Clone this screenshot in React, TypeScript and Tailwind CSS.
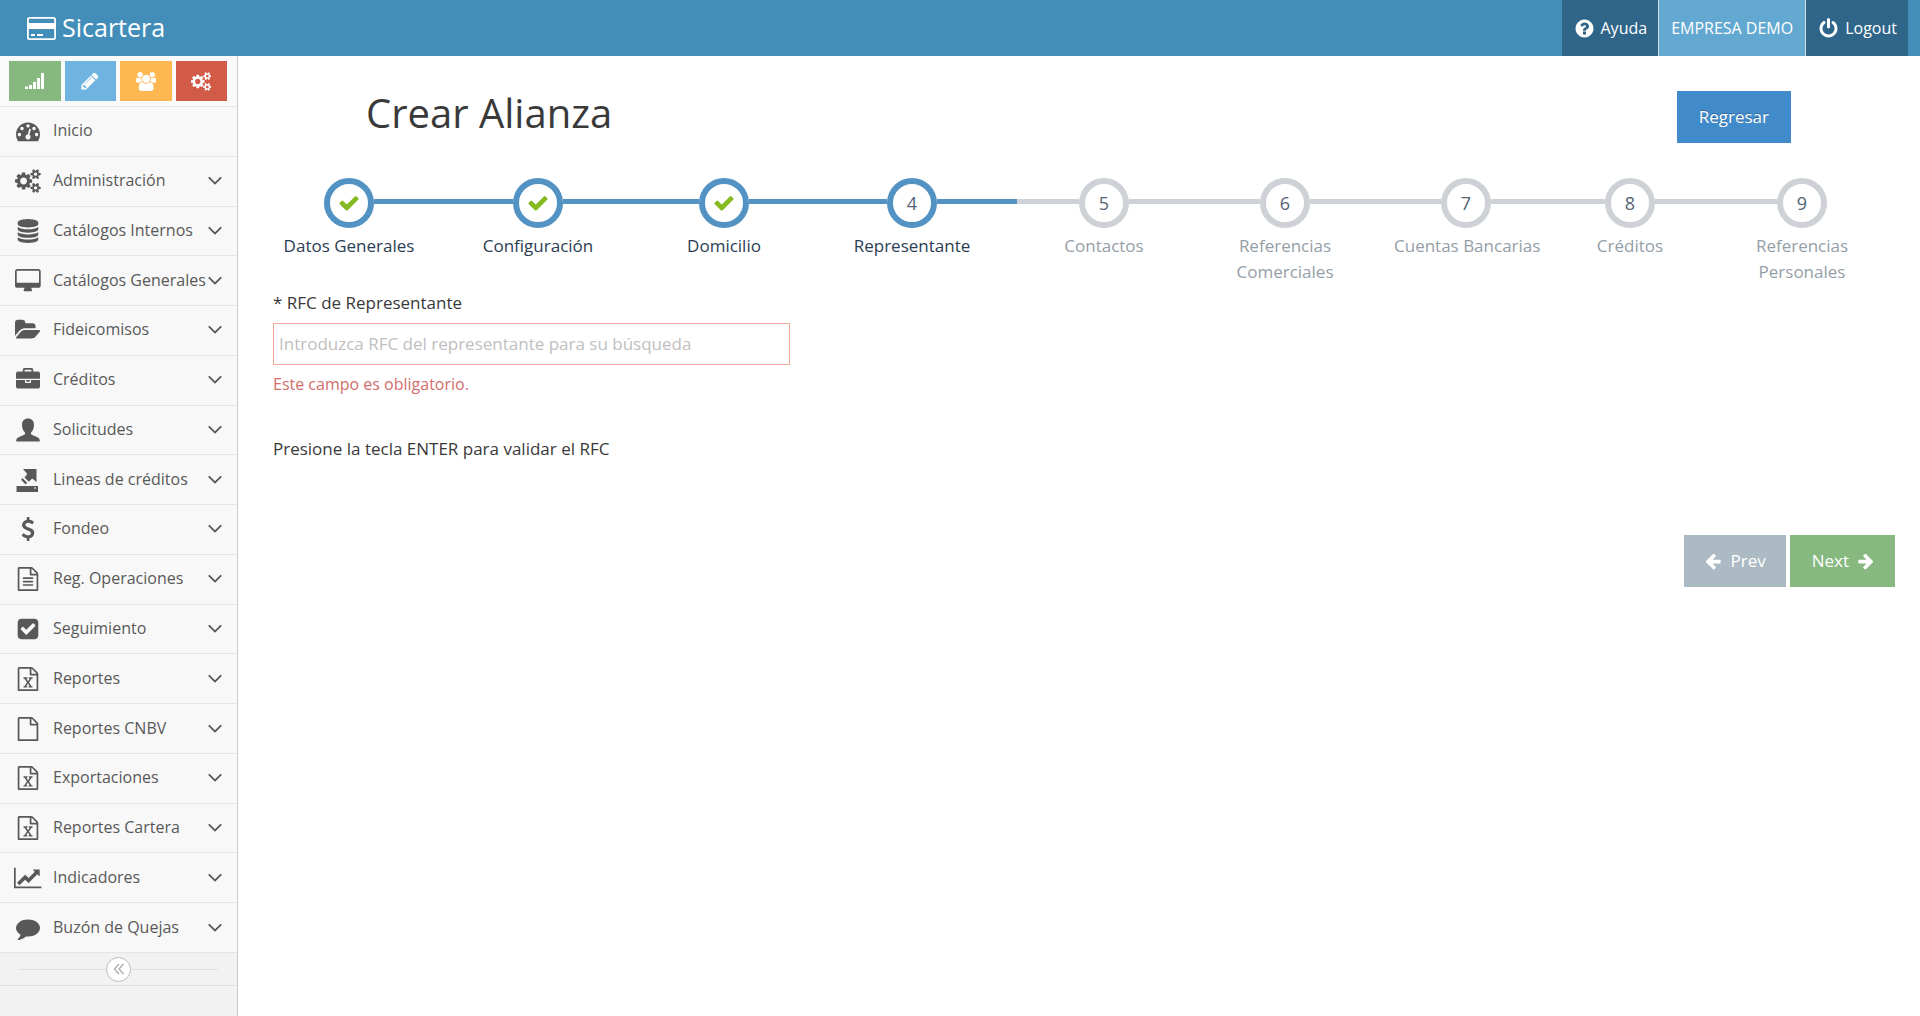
import { useState } from 'react';
import type { ReactNode } from 'react';

interface GlyphProps {
  d: string;
  className?: string;
  width?: number;
}

interface MenuEntry {
  label: string;
  icon: ReactNode;
  leaf?: boolean;
}

const COGS =
  'M896 896q0-106-75-181t-181-75-181 75-75 181 75 181 181 75 181-75 75-181zm768 512q0-52-38-90t-90-38-90 38-38 90q0 53 37.5 90.5t90.5 37.5 90.5-37.5 37.5-90.5zm0-1024q0-52-38-90t-90-38-90 38-38 90q0 53 37.5 90.5t90.5 37.5 90.5-37.5 37.5-90.5zm-384 421v185q0 10-7 19.5t-16 10.5l-155 24q-11 35-32 76 34 48 90 115 7 11 7 20 0 12-7 19-23 30-82.5 89.5t-78.5 59.5q-11 0-21-7l-115-90q-37 19-77 31-11 108-23 155-7 24-30 24h-186q-11 0-20-7.5t-10-17.5l-23-153q-34-10-75-31l-118 89q-7 7-20 7-11 0-21-8-144-133-144-160 0-9 7-19 10-14 41-53t47-61q-23-44-35-82l-152-24q-10-1-17-9.5t-7-19.5v-185q0-10 7-19.5t16-10.5l155-24q11-35 32-76-34-48-90-115-7-11-7-20 0-12 7-20 22-30 82-89t79-59q11 0 21 7l115 90q34-18 77-32 11-108 23-154 7-24 30-24h186q11 0 20 7.5t10 17.5l23 153q34 10 75 31l118-89q8-7 20-7 11 0 21 8 144 133 144 160 0 8-7 19-12 16-42 54t-45 60q23 48 34 82l152 23q10 2 17 10.5t7 19.5zm640 533v140q0 16-149 31-12 27-30 52 51 113 51 138 0 4-4 7-122 71-124 71-8 0-46-47t-52-68q-20 2-30 2t-30-2q-14 21-52 68t-46 47q-2 0-124-71-4-3-4-7 0-25 51-138-18-25-30-52-149-15-149-31v-140q0-16 149-31 13-29 30-52-51-113-51-138 0-4 4-7 4-2 35-20t59-34 30-16q8 0 46 46.5t52 67.5q20-2 30-2t30 2q51-71 92-112l6-2q4 0 124 70 4 3 4 7 0 25-51 138 17 23 30 52 149 15 149 31zm0-1024v140q0 16-149 31-12 27-30 52 51 113 51 138 0 4-4 7-122 71-124 71-8 0-46-47t-52-68q-20 2-30 2t-30-2q-14 21-52 68t-46 47q-2 0-124-71-4-3-4-7 0-25 51-138-18-25-30-52-149-15-149-31v-140q0-16 149-31 13-29 30-52-51-113-51-138 0-4 4-7 4-2 35-20t59-34 30-16q8 0 46 46.5t52 67.5q20-2 30-2t30 2q51-71 92-112l6-2q4 0 124 70 4 3 4 7 0 25-51 138 17 23 30 52 149 15 149 31z';
const DASHBOARD =
  'M384 1152q0-53-37.5-90.5t-90.5-37.5-90.5 37.5-37.5 90.5 37.5 90.5 90.5 37.5 90.5-37.5 37.5-90.5zm192-448q0-53-37.5-90.5t-90.5-37.5-90.5 37.5-37.5 90.5 37.5 90.5 90.5 37.5 90.5-37.5 37.5-90.5zm428 481l101-382q6-26-7.5-48.5t-38.5-29.5-48 6.5-30 39.5l-101 382q-60 5-107 43.5t-63 98.5q-20 77 20 146t117 89 146-20 89-117q16-60-6-117t-72-91zm660-33q0-53-37.5-90.5t-90.5-37.5-90.5 37.5-37.5 90.5 37.5 90.5 90.5 37.5 90.5-37.5 37.5-90.5zm-640-640q0-53-37.5-90.5t-90.5-37.5-90.5 37.5-37.5 90.5 37.5 90.5 90.5 37.5 90.5-37.5 37.5-90.5zm448 192q0-53-37.5-90.5t-90.5-37.5-90.5 37.5-37.5 90.5 37.5 90.5 90.5 37.5 90.5-37.5 37.5-90.5zm320 448q0 261-141 483-19 29-54 29h-1402q-35 0-54-29-141-221-141-483 0-182 71-348t191-286 286-191 348-71 348 71 286 191 191 286 71 348z';
const DATABASE =
  'M896 768q237 0 443-43t325-127v170q0 69-103 128t-280 93.5-385 34.5-385-34.5-280-93.5-103-128v-170q119 84 325 127t443 43zm0 768q237 0 443-43t325-127v170q0 69-103 128t-280 93.5-385 34.5-385-34.5-280-93.5-103-128v-170q119 84 325 127t443 43zm0-384q237 0 443-43t325-127v170q0 69-103 128t-280 93.5-385 34.5-385-34.5-280-93.5-103-128v-170q119 84 325 127t443 43zm0-1152q208 0 385 34.5t280 93.5 103 128v128q0 69-103 128t-280 93.5-385 34.5-385-34.5-280-93.5-103-128v-128q0-69 103-128t280-93.5 385-34.5z';
const DESKTOP =
  'M1792 992v-832q0-13-9.5-22.5t-22.5-9.5h-1600q-13 0-22.5 9.5t-9.5 22.5v832q0 13 9.5 22.5t22.5 9.5h1600q13 0 22.5-9.5t9.5-22.5zm128-832v1088q0 66-47 113t-113 47h-544q0 37 16 77.5t32 71 16 43.5q0 26-19 45t-45 19h-512q-26 0-45-19t-19-45q0-14 16-44t32-70 16-78h-544q-66 0-113-47t-47-113v-1088q0-66 47-113t113-47h1600q66 0 113 47t47 113z';
const FOLDER_OPEN =
  'M1879 952q0 31-31 66l-336 396q-43 51-120.5 86.5t-143.5 35.5h-1088q-34 0-60.5-13t-26.5-43q0-31 31-66l336-396q43-51 120.5-86.5t143.5-35.5h1088q34 0 60.5 13t26.5 43zm-343-344v160h-832q-94 0-197 47.5t-164 119.5l-337 396-5 6q0-4-.5-12.5t-.5-12.5v-960q0-92 66-158t158-66h320q92 0 158 66t66 158v32h544q92 0 158 66t66 158z';
const BRIEFCASE =
  'M640 256h512v-128h-512v128zm1152 640v480q0 66-47 113t-113 47h-1472q-66 0-113-47t-47-113v-480h672v160q0 26 19 45t45 19h320q26 0 45-19t19-45v-160h672zm-768 0v128h-256v-128h256zm768-480v384h-1792v-384q0-66 47-113t113-47h352v-160q0-40 28-68t68-28h576q40 0 68 28t28 68v160h352q66 0 113 47t47 113z';
const DOLLAR =
  'M1362 1185q0 153-99.5 263.5t-258.5 136.5v175q0 14-9 23t-23 9h-135q-13 0-22.5-9.5t-9.5-22.5v-175q-66-9-127.5-31t-101.5-44.5-74-48-46.5-37.5-17.5-18q-17-21-2-41l103-135q7-10 23-12 15-2 24 9l2 2q113 99 243 125 37 8 74 8 81 0 142.5-43t61.5-122q0-28-15-53t-33.5-42-58.5-37.5-66-32-80-32.5q-39-16-61.5-25t-61.5-26.5-62.5-31-56.5-35.5-53.5-42.5-43.5-49-35.5-58-21-66.5-8.5-78q0-138 98-242t255-134v-180q0-13 9.5-22.5t22.5-9.5h135q14 0 23 9t9 23v176q57 6 110.5 23t87 33.5 63.5 37.5 39 29 15 14q17 18 5 38l-81 146q-8 15-23 16-14 3-27-7-3-3-14.5-12t-39-26.5-58.5-32-74.5-26-85.5-11.5q-95 0-155 43t-60 111q0 26 8.5 48t29.5 41.5 39.5 33 56 31 60.5 27 70 27.5q53 20 81 31.5t76 35 75.5 42.5 62 50 53 63.5 31.5 76.5 13 94z';
const FILE =
  'M1596 380q28 28 48 76t20 88v1152q0 40-28 68t-68 28h-1344q-40 0-68-28t-28-68v-1600q0-40 28-68t68-28h896q40 0 88 20t76 48zm-444-244v376h376q-10-29-22-41l-313-313q-12-12-41-22zm384 1528v-1024h-416q-40 0-68-28t-28-68v-416h-768v1536h1280z';
const FILE_LINES =
  FILE +
  'm-1024-864q0-14 9-23t23-9h704q14 0 23 9t9 23v64q0 14-9 23t-23 9h-704q-14 0-23-9t-9-23v-64zm736 224q14 0 23 9t9 23v64q0 14-9 23t-23 9h-704q-14 0-23-9t-9-23v-64q0-14 9-23t23-9h704zm0 256q14 0 23 9t9 23v64q0 14-9 23t-23 9h-704q-14 0-23-9t-9-23v-64q0-14 9-23t23-9h704z';
const FILE_EXCEL =
  FILE +
  'm-979-234v106h281v-106h-75l103-161q5-7 10-16.5t7.5-13.5 3.5-4h2q1 4 5 10 2 4 4.5 7.5t6 8 6.5 8.5l107 161h-76v106h291v-106h-68l-192-273 195-282h67v-107h-279v107h74l-103 159q-4 7-10 16.5t-9 13.5l-2 3h-2q-1-4-5-10-6-11-17-23l-106-159h76v-107h-290v107h68l189 272-194 283h-68z';
const CHECK_SQUARE =
  'M813 1299l614-614q19-19 19-45t-19-45l-102-102q-19-19-45-19t-45 19l-467 467-211-211q-19-19-45-19t-45 19l-102 102q-19 19-19 45t19 45l358 358q19 19 45 19t45-19zm851-883v960q0 119-84.5 203.5t-203.5 84.5h-960q-119 0-203.5-84.5t-84.5-203.5v-960q0-119 84.5-203.5t203.5-84.5h960q119 0 203.5 84.5t84.5 203.5z';
const LINE_CHART =
  'M2048 1536v128h-2048v-1536h128v1408h1920zm-128-1248v435q0 21-19.5 29.5t-35.5-7.5l-121-121-633 633q-10 10-23 10t-23-10l-233-233-416 416-192-192 585-585q10-10 23-10t23 10l233 233 464-464-121-121q-16-16-7.5-35.5t29.5-19.5h435q14 0 23 9t9 23z';
const COMMENT =
  'M1792 896q0 174-120 321.5t-326 233-450 85.5q-70 0-145-8-198 175-460 242-49 14-114 22-17 2-30.5-9t-17.5-29v-1q-3-4-.5-12t2-10 4.5-9.5l6-9 7-8.5 8-9q7-8 31-34.5t34.5-38 31-39.5 32.5-51 27-59 26-76q-157-89-247.5-220t-90.5-281q0-130 71-248.5t191-204.5 286-136.5 348-50.5q244 0 450 85.5t326 233 120 321.5z';
const ANGLE_DOWN =
  'M1395 736q0 13-10 23l-466 466q-10 10-23 10t-23-10l-466-466q-10-10-10-23t10-23l50-50q10-10 23-10t23 10l393 393 393-393q10-10 23-10t23 10l50 50q10 10 10 23z';
const QUESTION =
  'M1024 1376v-192q0-14-9-23t-23-9h-192q-14 0-23 9t-9 23v192q0 14 9 23t23 9h192q14 0 23-9t9-23zm256-672q0-88-55.5-163t-138.5-116-170-41q-243 0-371 213-15 24 8 42l132 100q7 6 19 6 16 0 25-12 53-68 86-92 34-24 86-24 48 0 85.5 26t37.5 59q0 38-20 61t-68 45q-63 28-115.5 86.5t-52.5 125.5v36q0 14 9 23t23 9h192q14 0 23-9t9-23q0-19 21.5-49.5t54.5-49.5q32-18 49-28.5t46-35 44.5-48 28-60.5 12.5-81zm384 192q0 209-103 385.5t-279.5 279.5-385.5 103-385.5-103-279.5-279.5-103-385.5 103-385.5 279.5-279.5 385.5-103 385.5 103 279.5 279.5 103 385.5z';
const POWER =
  'M1664 896q0 156-61 298t-164 245-245 164-298 61-298-61-245-164-164-245-61-298q0-182 80.5-343t226.5-270q43-32 95.5-25t83.5 50q32 42 24.5 94.5t-49.5 84.5q-98 74-151.5 181t-53.5 228q0 104 40.5 198.5t109.5 163.5 163.5 109.5 198.5 40.5 198.5-40.5 163.5-109.5 109.5-163.5 40.5-198.5q0-121-53.5-228t-151.5-181q-42-32-49.5-84.5t24.5-94.5q31-43 84-50t95 25q146 109 226.5 270t80.5 343zm-640-768v640q0 52-38 90t-90 38-90-38-38-90v-640q0-52 38-90t90-38 90 38 38 90z';
const PENCIL =
  'M491 1536l91-91-235-235-91 91v107h128v128h107zm523-928q0-22-22-22-10 0-17 7l-542 542q-7 7-7 17 0 22 22 22 10 0 17-7l542-542q7-7 7-17zm-54-192l416 416-832 832h-416v-416zm683 96q0 53-37 90l-166 166-416-416 166-165q36-38 90-38 53 0 91 38l235 234q37 39 37 91z';
const USERS =
  'M593 896q-162 5-265 128h-134q-82 0-138-40.5t-56-118.5q0-353 124-353 6 0 43.5 21t97.5 42.5 119 21.5q67 0 133-23-5 37-5 66 0 139 81 256zm1071 637q0 120-73 189.5t-194 69.5h-874q-121 0-194-69.5t-73-189.5q0-53 3.5-103.5t14-109 26.5-108.5 43-97.5 62-81 85.5-53.5 111.5-20q10 0 43 21.5t73 48 107 48 135 21.5 135-21.5 107-48 73-48 43-21.5q61 0 111.5 20t85.5 53.5 62 81 43 97.5 26.5 108.5 14 109 3.5 103.5zm-1024-1277q0 106-75 181t-181 75-181-75-75-181 75-181 181-75 181 75 75 181zm704 384q0 159-112.5 271.5t-271.5 112.5-271.5-112.5-112.5-271.5 112.5-271.5 271.5-112.5 271.5 112.5 112.5 271.5zm576 225q0 78-56 118.5t-138 40.5h-134q-103-123-265-128 81-117 81-256 0-29-5-66 66 23 133 23 59 0 119-21.5t97.5-42.5 43.5-21q124 0 124 353zm-128-609q0 106-75 181t-181 75-181-75-75-181 75-181 181-75 181 75 75 181z';
const CHECK =
  'M1671 566q0 40-28 68l-724 724-136 136q-28 28-68 28t-68-28l-136-136-362-362q-28-28-28-68t28-68l136-136q28-28 68-28t68 28l294 295 656-657q28-28 68-28t68 28l136 136q28 28 28 68z';
const ARROW_LEFT =
  'M1664 896v128q0 53-32.5 90.5t-84.5 37.5h-704l293 294q38 36 38 90t-38 90l-75 76q-37 37-90 37-52 0-91-37l-651-652q-37-37-37-90 0-52 37-91l651-650q38-38 91-38 52 0 90 38l75 74q38 38 38 91t-38 91l-293 293h704q52 0 84.5 37.5t32.5 90.5z';

function Glyph({ d, className, width = 1792 }: GlyphProps) {
  return (
    <svg viewBox={`0 0 ${width} 1792`} fill="currentColor" aria-hidden="true" className={className}>
      <path d={d} />
    </svg>
  );
}

function CardLogo() {
  return (
    <svg viewBox="0 0 29 23" aria-hidden="true" className="h-[23px] w-[29px] shrink-0">
      <rect x="0.9" y="0.9" width="27.2" height="21.2" rx="1.6" fill="none" stroke="currentColor" strokeWidth="1.8" />
      <path d="M1 6h27v6H1zM4 17h4v2H4zM10 17h6v2h-6z" fill="currentColor" />
    </svg>
  );
}

function UserIcon() {
  return (
    <svg viewBox="0 0 24 24" fill="currentColor" aria-hidden="true" className="h-6 w-6">
      <path d="M12 .5c3.700 0 6 2.500 6 6.200 0 3.300-1.200 6-2.700 7.500-.5.6-.6 1.800.2 2.400 1.400 1 4.500 1.900 6.700 3.200 1.200.7 1.600 1.800 1.600 3.700H.2c0-1.900.4-3 1.600-3.700 2.200-1.300 5.300-2.200 6.700-3.200.8-.6.7-1.800.2-2.400C7.200 12.700 6 10 6 6.700 6 3 8.300.5 12 .5z" />
    </svg>
  );
}

function ExportIcon() {
  return (
    <svg viewBox="0 0 24 24" fill="currentColor" aria-hidden="true" className="h-6 w-6">
      <path d="M7 1h13.500v13l-4.300-3.600-3.400 3.400-4.300-4.300 2.800-3.400zM6.600 10.200l4.600 4.600-1.600 1.600-4.600-4.600z" />
      <path fillRule="evenodd" d="M.5 18h21.500v6H.5zM18 19.500v1h2v-1z" />
    </svg>
  );
}

function SignalIcon() {
  return (
    <svg viewBox="0 0 19 16" fill="currentColor" aria-hidden="true" className="h-4 w-[19px]">
      <path d="M0 13.500h3V16H0zM4 12h3v4H4zM8 9h3v7H8zM12 5h3v11h-3zM16 0h3v16h-3z" />
    </svg>
  );
}

const menu: MenuEntry[] = [
  { label: 'Inicio', icon: <Glyph d={DASHBOARD} className="h-6 w-6" />, leaf: true },
  { label: 'Administración', icon: <Glyph d={COGS} width={1920} className="h-6" /> },
  { label: 'Catálogos Internos', icon: <Glyph d={DATABASE} className="h-6 w-6" /> },
  { label: 'Catálogos Generales', icon: <Glyph d={DESKTOP} width={1920} className="h-6" /> },
  { label: 'Fideicomisos', icon: <Glyph d={FOLDER_OPEN} width={1920} className="h-6" /> },
  { label: 'Créditos', icon: <Glyph d={BRIEFCASE} className="h-6 w-6" /> },
  { label: 'Solicitudes', icon: <UserIcon /> },
  { label: 'Lineas de créditos', icon: <ExportIcon /> },
  { label: 'Fondeo', icon: <Glyph d={DOLLAR} className="h-6 w-6" /> },
  { label: 'Reg. Operaciones', icon: <Glyph d={FILE_LINES} className="h-6 w-6" /> },
  { label: 'Seguimiento', icon: <Glyph d={CHECK_SQUARE} className="h-6 w-6" /> },
  { label: 'Reportes', icon: <Glyph d={FILE_EXCEL} className="h-6 w-6" /> },
  { label: 'Reportes CNBV', icon: <Glyph d={FILE} className="h-6 w-6" /> },
  { label: 'Exportaciones', icon: <Glyph d={FILE_EXCEL} className="h-6 w-6" /> },
  { label: 'Reportes Cartera', icon: <Glyph d={FILE_EXCEL} className="h-6 w-6" /> },
  { label: 'Indicadores', icon: <Glyph d={LINE_CHART} width={2048} className="h-6" /> },
  { label: 'Buzón de Quejas', icon: <Glyph d={COMMENT} className="h-6 w-6" /> },
];

const steps = [
  'Datos Generales',
  'Configuración',
  'Domicilio',
  'Representante',
  'Contactos',
  'Referencias Comerciales',
  'Cuentas Bancarias',
  'Créditos',
  'Referencias Personales',
];

const CURRENT_STEP = 3;

function Navbar() {
  return (
    <header className="flex h-14 items-stretch justify-between bg-[#438eb9] pr-3 text-base text-white">
      <a href="#" className="flex items-center gap-1.5 pl-[27px] text-[25px]">
        <CardLogo />
        Sicartera
      </a>
      <nav className="flex">
        <a href="#" className="flex items-center gap-1.5 bg-[#2e6589] pr-[11px] pl-3">
          <Glyph d={QUESTION} className="h-[21px] w-[21px]" />
          Ayuda
        </a>
        <a href="#" className="flex items-center border-x border-[#ddd] bg-[#62a8d1] px-3">
          EMPRESA DEMO
        </a>
        <a href="#" className="flex items-center gap-1.5 bg-[#2e6589] pr-[11px] pl-3">
          <Glyph d={POWER} className="h-[21px] w-[21px]" />
          Logout
        </a>
      </nav>
    </header>
  );
}

function Sidebar() {
  return (
    <aside className="flex w-[238px] shrink-0 flex-col border-r border-[#ccc] bg-[#f2f2f2]">
      <div className="grid h-[50px] grid-cols-4 gap-1 bg-[#fafafa] py-[5px] pr-2.5 pl-[9px] text-white">
        <button type="button" aria-label="Estadísticas" className="flex items-center justify-center bg-[#87b87f]">
          <SignalIcon />
        </button>
        <button type="button" aria-label="Editar" className="flex items-center justify-center bg-[#6fb3e0]">
          <Glyph d={PENCIL} className="h-5 w-5" />
        </button>
        <button type="button" aria-label="Usuarios" className="flex items-center justify-center bg-[#ffb752]">
          <Glyph d={USERS} width={1920} className="h-[19px]" />
        </button>
        <button type="button" aria-label="Ajustes" className="flex items-center justify-center bg-[#d15b47]">
          <Glyph d={COGS} width={1920} className="h-[19px]" />
        </button>
      </div>

      <ul className="grid h-[847px] auto-rows-fr grid-cols-1 border-b border-[#e5e5e5] text-base text-[#585858]">
        {menu.map((item) => (
          <li key={item.label} className="border-t border-[#e5e5e5] bg-[#f8f8f8]">
            <a href="#" className="flex h-full items-center pr-2.5 pl-[14px]">
              <span className="flex w-7 shrink-0 justify-center">{item.icon}</span>
              <span className="min-w-0 flex-1 pb-0.5 pl-[11px] whitespace-nowrap">{item.label}</span>
              {!item.leaf && <Glyph d={ANGLE_DOWN} className="mb-0.5 h-6 w-6 shrink-0" />}
            </a>
          </li>
        ))}
      </ul>

      <div className="flex h-[33px] items-center border-b border-[#e0e0e0] px-[19px]">
        <span className="h-px flex-1 bg-[#e0e0e0]" />
        <button
          type="button"
          aria-label="Contraer menú"
          className="flex h-[25px] w-[25px] items-center justify-center rounded-full border border-[#bbb] bg-white text-[#aaa]"
        >
          <svg viewBox="0 0 12 12" fill="none" stroke="currentColor" strokeWidth="1.3" className="h-3 w-3">
            <path d="M6 1L1.500 6L6 11M10.500 1L6 6L10.500 11" />
          </svg>
        </button>
        <span className="h-px flex-1 bg-[#e0e0e0]" />
      </div>
    </aside>
  );
}

function Connector({ active, hidden }: { active: boolean; hidden: boolean }) {
  const color = hidden ? 'bg-transparent' : active ? 'bg-[#5293c4]' : 'bg-[#ced1d6]';
  return <span className={`mt-[21px] h-[5px] flex-1 ${color}`} />;
}

function Stepper() {
  return (
    <ol className="grid grid-cols-[172fr_206fr_166fr_210fr_174fr_188fr_174fr_154fr_190fr]">
      {steps.map((label, i) => {
        const active = i <= CURRENT_STEP;
        return (
          <li key={label} className="flex flex-col items-center">
            <div className="flex w-full items-start">
              <Connector active={active} hidden={i === 0} />
              <span
                className={`flex h-[50px] w-[50px] items-center justify-center rounded-full border-6 bg-white text-lg text-[#546474] ${
                  active ? 'border-[#5293c4]' : 'border-[#ced1d6]'
                }`}
              >
                {i < CURRENT_STEP ? <Glyph d={CHECK} className="h-[22px] w-[22px] text-[#87ba21]" /> : i + 1}
              </span>
              <Connector active={active} hidden={i === steps.length - 1} />
            </div>
            <span
              className={`mt-[5px] max-w-40 px-2 text-center leading-[26px] ${
                active ? 'text-[#2b3d53]' : 'text-[#949ea7]'
              } ${label.startsWith('Referencias') ? 'w-min' : 'whitespace-nowrap'}`}
            >
              {label}
            </span>
          </li>
        );
      })}
    </ol>
  );
}

export default function App() {
  const [rfc, setRfc] = useState('');

  return (
    <div className="flex min-h-screen flex-col bg-white font-['Open_Sans',sans-serif] text-[17px] text-[#393939]">
      <Navbar />
      <div className="flex flex-1">
        <Sidebar />
        <main className="min-w-0 flex-1 pr-[23px] pl-[25px]">
          <div className="flex items-start justify-between pt-[35px] pr-[106px] pl-[103px]">
            <h1 className="text-[40px] leading-[44px]">Crear Alianza</h1>
            <button type="button" className="h-[52px] bg-[#428bca] px-[22px] text-white text-shadow-[0_-1px_0_rgb(0_0_0/0.25)]">
              Regresar
            </button>
          </div>

          <div className="pt-[35px]">
            <Stepper />
          </div>

          <form className="pr-0.5 pl-2.5" onSubmit={(e) => e.preventDefault()}>
            <label htmlFor="rfc" className="block pt-[5px] leading-[26px]">
              * RFC de Representante
            </label>
            <input
              id="rfc"
              type="text"
              value={rfc}
              onChange={(e) => setRfc(e.target.value)}
              placeholder="Introduzca RFC del representante para su búsqueda"
              className="mt-[7px] block h-[42px] w-full max-w-[517px] border border-[#f2a696] px-[5px] pb-0.5 outline-none placeholder:text-[#c0c0c0]"
            />
            {rfc === '' && <p className="mt-[7px] text-base leading-6 text-[#d16e6c]">Este campo es obligatorio.</p>}
            <p className="mt-10 leading-[26px]">Presione la tecla ENTER para validar el RFC</p>

            <div className="mt-[73px] flex justify-end gap-1 text-white text-shadow-[0_-1px_0_rgb(0_0_0/0.25)]">
              <button type="button" className="flex h-[52px] items-center gap-2 bg-[#abbac3] px-5">
                <Glyph d={ARROW_LEFT} className="h-[18px] w-[18px]" />
                Prev
              </button>
              <button type="submit" className="flex h-[52px] items-center gap-2 bg-[#87b87f] pr-5 pl-[22px]">
                Next
                <Glyph d={ARROW_LEFT} className="h-[18px] w-[18px] -scale-x-100" />
              </button>
            </div>
          </form>
        </main>
      </div>
    </div>
  );
}
